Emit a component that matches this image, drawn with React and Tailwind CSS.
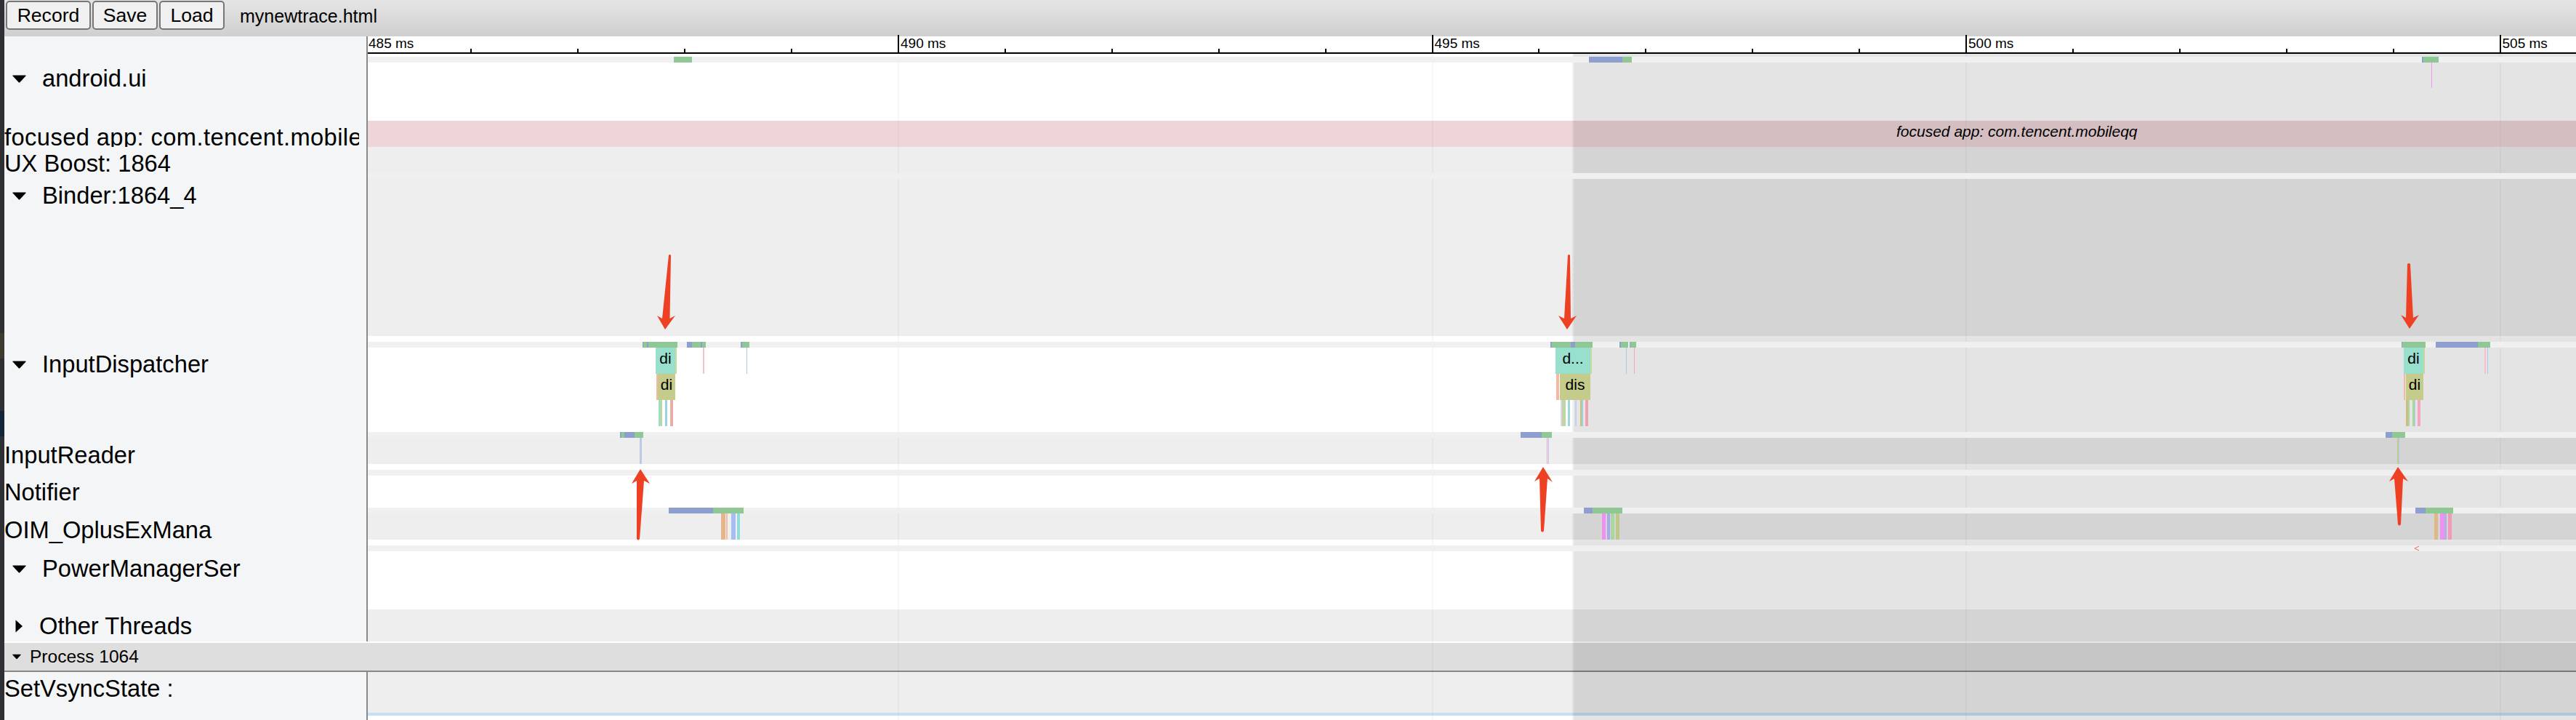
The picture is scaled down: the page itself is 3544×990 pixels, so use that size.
import React from 'react';

const BLUE = '#8e9fcf';
const GREEN = '#8fc795';
const TEAL = '#98dfcd';
const OLIVE = '#c5cb8a';
const SALMON = '#f5b9a3';
const PINK = '#f5c0c8';
const SKY = '#a9c8ee';

// x positions are page pixels, taken from the trace
const androidSched = [
  [927, 952, GREEN],
  [2186, 2232, BLUE],
  [2232, 2245, GREEN],
  [3332, 3334, BLUE],
  [3334, 3355, GREEN],
];
const androidMain = [[3345, 3346, '#e89ae8', null, 'h-[35px]']];

const dispatcherSched = [
  [884, 885, BLUE], [885, 890, GREEN], [890, 892, BLUE], [892, 932, GREEN],
  [945, 952, BLUE], [952, 964, GREEN], [964, 966, BLUE], [966, 971, GREEN],
  [1019, 1021, BLUE], [1021, 1031, GREEN],
  [2133, 2135, BLUE], [2135, 2161, GREEN], [2161, 2167, BLUE], [2167, 2191, GREEN],
  [2228, 2230, BLUE], [2230, 2240, GREEN], [2242, 2243, BLUE], [2243, 2251, GREEN],
  [3304, 3305, BLUE], [3305, 3337, GREEN],
  [3351, 3409, BLUE], [3409, 3426, GREEN],
];
const dispatcherDepth0 = [
  [902, 929, TEAL, 'di'], [929, 931, '#c5dba0'], [967, 969, PINK], [1027, 1028, SKY],
  [2140, 2188, TEAL, 'd...'], [2188, 2190, '#c5dba0'], [2237, 2238, SKY], [2248, 2249, '#f5a5b8'],
  [3307, 3334, TEAL, 'di'], [3334, 3336, '#c5d5a0'], [3418, 3420, PINK], [3422, 3423, SKY],
];
const dispatcherDepth1 = [
  [903, 904.5, SALMON], [905, 929, OLIVE, 'di'],
  [2141, 2145, SALMON], [2146, 2188, OLIVE, 'dis'],
  [3307, 3309, SALMON], [3310, 3334, OLIVE, 'di'],
];
const dispatcherDepth2 = [
  [906, 908, TEAL], [908, 911, '#b8d9a0'], [915, 918, '#9fcfe0'], [922, 923, OLIVE], [923, 926, '#f5a5b0'],
  [2147, 2149, '#c8dcf0'], [2149, 2150, SALMON], [2150, 2154, '#b8d9a0'], [2157, 2160, '#9fd8d8'],
  [2167, 2169, '#c5cfe8'], [2174, 2176, '#c5bf80'], [2176, 2178, '#a0cfd8'], [2181, 2185, '#f0a0b0'],
  [3310, 3313, '#d0bd80'], [3313, 3315, '#a8d8a0'], [3319, 3322, '#a8d8a0'], [3322, 3323, '#b8c8f0'], [3326, 3330, '#f5a5c0'],
];

const readerSched = [
  [853, 855, BLUE], [855, 859, GREEN], [859, 873, BLUE], [873, 885, GREEN],
  [2092, 2121, BLUE], [2121, 2135, GREEN],
  [3282, 3291, BLUE], [3291, 3309, GREEN],
];
const readerMain = [
  [880, 881, '#c5c5dc'], [881, 883, '#b8cde8'],
  [2128, 2129, '#f0a0c8'], [2130, 2131, SKY],
  [3298, 3300, '#c0cc90'], [3300, 3301, SKY],
];

const oimSched = [
  [920, 981, BLUE], [981, 1023, GREEN],
  [2179, 2191, BLUE], [2191, 2232, GREEN],
  [3323, 3337, BLUE], [3337, 3375, GREEN],
];
const oimMain = [
  [992, 998, '#e5b58e'], [999, 1001, '#f0c0a0'], [1006, 1012, '#a5bdf0'], [1014, 1018, '#8fdcdc'],
  [2204, 2209, '#f090f0'], [2211, 2215, '#a8a8f0'], [2216, 2221, '#a8d8a0'], [2223, 2228, '#c0c888'],
  [3349, 3354, '#ddb98a'], [3357, 3362, '#f090f0'], [3362, 3366, '#c0a8e8'], [3368, 3373, '#f09ab8'],
];

const arrows = [
  'M920 351Q921.5 349 923 351L921.5 438L929 434L915 453L904 434L911 438Z',
  'M2157 351Q2158.5 349 2160 351L2161 438L2169 434L2156 453L2144 434L2152 438Z',
  'M3312 363Q3314 361 3316 363L3320 437L3328 433L3315 452L3303 433L3310 437Z',
  'M876 741Q878 744 880 741L886 661L894 665L881 645L869 665L876 661Z',
  'M2120 730Q2122 733 2124 730L2129 658L2136 663L2123 642L2111 662L2118 658Z',
  'M3299 721Q3301 724 3303 721L3306 658L3313 662L3299 642L3287 662L3294 658Z',
];

function Slices({ items }) {
  return items.map(([from, to, color, text, heightClass], i) => (
    <div
      key={i}
      className={`absolute top-0 z-[2] overflow-hidden text-center text-[21px] leading-[30px] text-black ${heightClass || 'h-full'}`}
      style={{ left: from - 506, width: to - from, backgroundColor: color }}
    >
      {text}
    </div>
  ));
}

function Strip({ items = [] }) {
  return (
    <div className="relative z-[2] h-[8px] bg-[#f0f0f0]">
      <Slices items={items} />
    </div>
  );
}

function Caret({ className }) {
  return (
    <svg viewBox="0 0 19 11" className={className}>
      <path d="M1 0.5H18Q19 0.5 18.4 1.4L10.3 10.2Q9.5 11 8.7 10.2L0.6 1.4Q0 0.5 1 0.5Z" fill="#000" />
    </svg>
  );
}

function Row({ className, labelClass, label, caret, children }) {
  return (
    <div className={`flex ${className}`}>
      <div className="w-[500px] shrink-0 border-r-2 border-[#8a8a8a] bg-[#f4f5f7]">
        <div className={`flex w-[488px] items-center overflow-hidden whitespace-nowrap text-[32.7px] leading-[36px] text-black ${labelClass}`}>
          {caret === 'down' && <Caret className="ml-[11px] mr-[22px] h-[11px] w-[19px] shrink-0" />}
          {caret === 'right' && (
            <svg viewBox="0 0 10 18" className="ml-[15px] mr-[23px] h-[18px] w-[10px] shrink-0">
              <path d="M0.5 0.5L10 9L0.5 17.5Z" fill="#000" />
            </svg>
          )}
          {label}
        </div>
      </div>
      <div className="flex min-w-0 flex-1 flex-col">{children}</div>
    </div>
  );
}

function Track({ className, items = [], children }) {
  return (
    <div className={`relative ${className}`}>
      <Slices items={items} />
      {children}
    </div>
  );
}

function Ruler() {
  const ticks = Array.from({ length: 21 }, (_, i) => i);
  return (
    <div className="relative z-[3] h-[24px] flex-1 border-b-2 border-black bg-white">
      {ticks.slice(1).map((i) => (
        <div
          key={i}
          className={`absolute bottom-0 w-[2px] bg-black ${i % 5 === 0 ? 'h-[24px]' : 'h-[5px]'}`}
          style={{ left: 500.5 + 146.9 * i - 506 }}
        />
      ))}
      {ticks.filter((i) => i % 5 === 0).map((i) => (
        <span
          key={i}
          className="absolute top-0 text-[19px] leading-[20px] text-black"
          style={{ left: i === 0 ? 1 : 500.5 + 146.9 * i - 506 + 4 }}
        >
          {485 + i} ms
        </span>
      ))}
    </div>
  );
}

export default function App() {
  return (
    <div className="flex h-[990px] w-[3544px] overflow-hidden bg-white font-['Liberation_Sans',Arial,sans-serif]">
      {/* bit of desktop showing behind the browser window */}
      <div className="flex w-[6px] shrink-0 flex-col bg-[#2f3033]">
        <div className="h-[458px]" />
        <div className="h-[35px] bg-[#3d3a30]" />
        <div className="h-[72px]" />
        <div className="h-[35px] bg-[#12263a]" />
      </div>

      <div className="relative min-w-0 flex-1">
        <div className="flex h-[50px] items-start bg-linear-to-b from-[#e5e5e5] to-[#cfcfcf] pl-[2px] pt-px">
          <div className="flex gap-[2px]">
            <button className="h-[40px] w-[117px] rounded-[5px] border-2 border-[#777] bg-[#f0f0f0] text-[26.6px] leading-none text-black">Record</button>
            <button className="h-[40px] w-[90px] rounded-[5px] border-2 border-[#777] bg-[#f0f0f0] text-[26.6px] leading-none text-black">Save</button>
            <button className="h-[40px] w-[90px] rounded-[5px] border-2 border-[#777] bg-[#f0f0f0] text-[26.6px] leading-none text-black">Load</button>
          </div>
          <span className="ml-[21px] text-[25px] leading-[42px] text-black">mynewtrace.html</span>
        </div>

        <div className="flex h-[24px]">
          <div className="w-[500px] shrink-0 border-r-2 border-[#8a8a8a] bg-[#f4f5f7]" />
          <Ruler />
        </div>

        <Row className="h-[92px]" labelClass="pt-[16px]" label="android.ui" caret="down">
          <div className="h-[4px]" />
          <Strip items={androidSched} />
          <Track className="h-[80px]" items={androidMain} />
        </Row>
        <Row className="h-[36px]" labelClass="pt-[5px] tracking-[0.4px]" label="focused app: com.tencent.mobileqq">
          <Track className="h-[36px] bg-[#eed5d9]">
            <span className="absolute left-[2103px] top-[-3px] z-[2] whitespace-nowrap text-[21px] italic leading-[36px] text-black">
              focused app: com.tencent.mobileqq
            </span>
          </Track>
        </Row>
        <Row className="h-[36px]" labelClass="pt-[5px]" label="UX Boost: 1864">
          <div className="h-[36px] bg-[#eeeeee]" />
        </Row>
        <Row className="h-[232px]" labelClass="pt-[13px]" label="Binder:1864_4" caret="down">
          <Strip />
          <div className="h-[216px] bg-[#eeeeee]" />
        </Row>
        <Row className="h-[124px]" labelClass="pt-[13px]" label="InputDispatcher" caret="down">
          <Strip items={dispatcherSched} />
          <Track className="h-[36px]" items={dispatcherDepth0} />
          <Track className="h-[36px]" items={dispatcherDepth1} />
          <Track className="h-[36px]" items={dispatcherDepth2} />
        </Row>
        <Row className="h-[52px]" labelClass="pt-[14px]" label="InputReader">
          <Strip items={readerSched} />
          <Track className="h-[36px] bg-[#eeeeee]" items={readerMain} />
        </Row>
        <Row className="h-[52px]" labelClass="pt-[13px]" label="Notifier">
          <Strip />
        </Row>
        <Row className="h-[52px]" labelClass="pt-[13px]" label="OIM_OplusExMana">
          <Strip items={oimSched} />
          <Track className="h-[36px] bg-[#eeeeee]" items={oimMain} />
        </Row>
        <Row className="h-[88px]" labelClass="pt-[14px]" label="PowerManagerSer" caret="down">
          <Strip />
        </Row>
        <Row className="h-[44px]" labelClass="pt-[5px]" label="Other Threads" caret="right">
          <div className="h-[44px] bg-[#eeeeee]" />
        </Row>

        <div className="h-[2px]" />
        <div className="flex h-[40px] items-center border-b-2 border-[#888] bg-[#dedede] pl-[11px] text-[24.5px] leading-[38px] text-black">
          <Caret className="mr-[12px] h-[8px] w-[12px] shrink-0" />
          Process 1064
        </div>

        <Row className="h-[66px]" labelClass="pt-[5px]" label="SetVsyncState :">
          <div className="h-[56px] bg-[#eeeeee]" />
          <div className="h-[4px] bg-[#c5dff5]" />
        </Row>

        {/* major grid lines, below the scheduling strips */}
        {[5, 10, 15, 20].map((i) => (
          <div
            key={i}
            className="absolute bottom-0 top-[74px] z-[1] w-[2px] bg-black/[0.03]"
            style={{ left: 500.5 + 146.9 * i - 6 }}
          />
        ))}

        {/* selected time range shading */}
        <div className="absolute bottom-0 left-[2157px] right-0 top-[74px] z-[1] border-l-2 border-black/[0.05] bg-black/[0.105] bg-clip-padding" />

        {/* annotations drawn on top of the screenshot */}
        <svg className="pointer-events-none absolute left-[-6px] top-0 z-[4] h-[990px] w-[3544px]" viewBox="0 0 3544 990">
          {arrows.map((d) => (
            <path key={d} d={d} fill="#ee4123" />
          ))}
          <path d="M3328 751L3322 754L3328 757" fill="none" stroke="#ee6a55" strokeWidth="1" />
        </svg>
      </div>
    </div>
  );
}
